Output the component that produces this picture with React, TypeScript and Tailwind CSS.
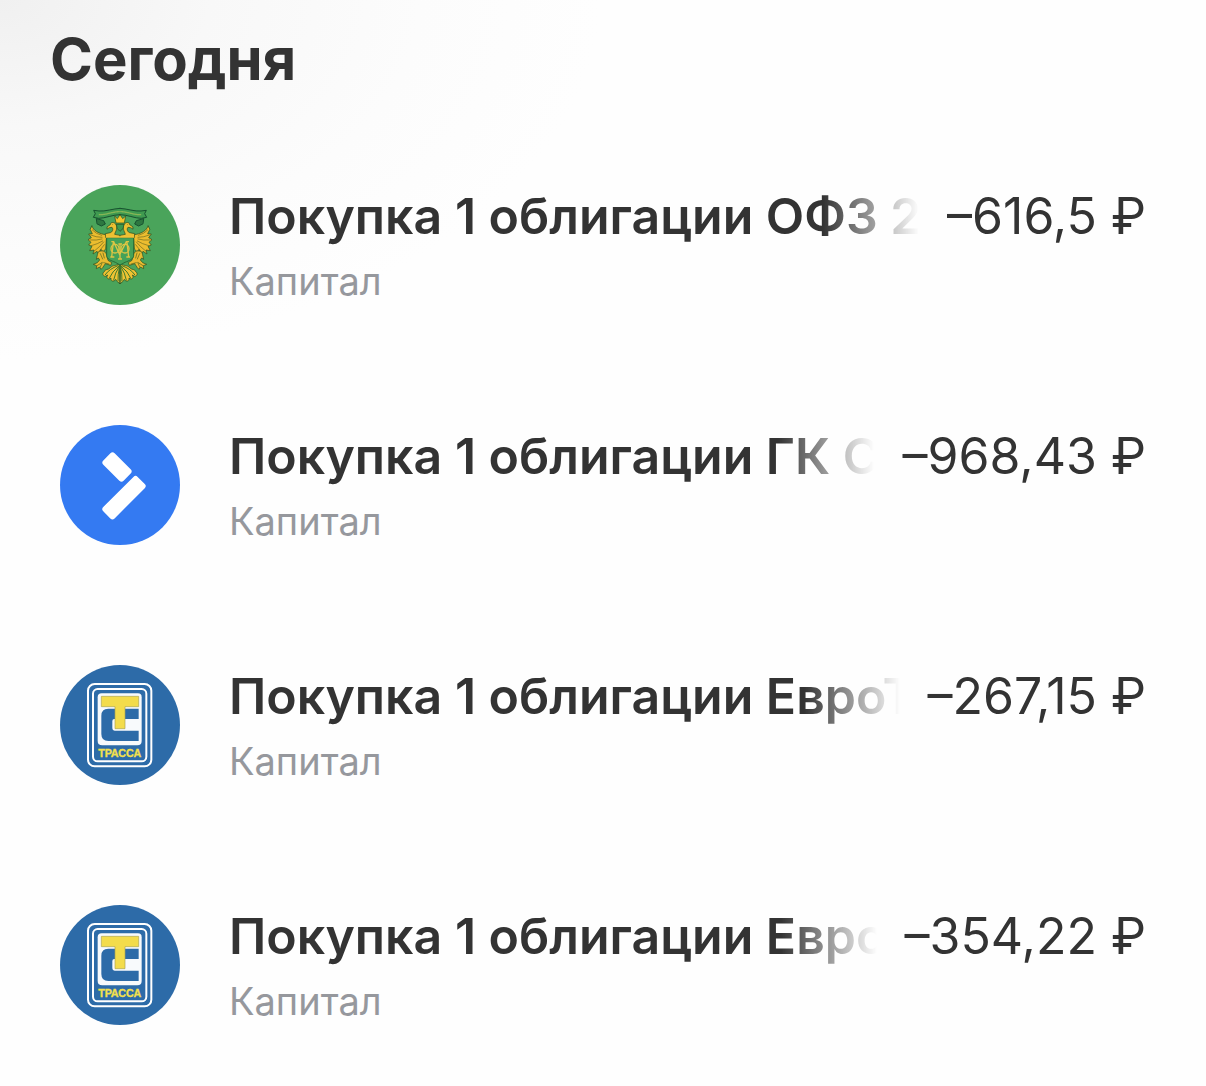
import type { ReactNode } from "react";

function EagleHalf() {
  return (
    <g stroke="#2c4a1e" strokeWidth="2" strokeLinejoin="round" strokeLinecap="round">
      {/* ribbon */}
      <path d="M210 100 C190 101 165 110 147 108 L131 106 L136 116 L130 127 L146 130 C166 130 188 119 210 119" fill="#3f9a50" stroke="#17502f" strokeWidth="3" />
      <path d="M140 131 L161 137 L166 147 L154 153 L142 147 Z" fill="#2d7740" stroke="#17502f" strokeWidth="3" />
      <path d="M148 119 C168 120 188 110 208 110" fill="none" stroke="#86b655" strokeWidth="4" strokeDasharray="3 2" />
      {/* wing */}
      <path d="M126 153 C130 168 146 174 160 178 L185 181 L182 190 L169 191 L167 222 L159 230 L153 223 L147 237 L141 229 L129 237 L132 225 L119 227 L126 214 L116 210 L123 202 L114 194 L124 188 L116 177 L127 176 L121 164 Z" fill="#ecbd2f" />
      <path d="M127 165 Q138 177 155 181 M122 180 Q138 187 156 187 M120 195 Q139 197 156 192 M124 212 Q143 207 158 198 M133 228 Q149 216 161 201 M148 228 L163 209" fill="none" stroke="#6b6a20" strokeWidth="2" />
      {/* head and neck */}
      <path d="M172 155 L181 149 C181 142 190 140 196 146 C206 158 196 169 194 178 L210 181 L210 188 L167 188 L166 176 L181 173 C187 171 191 163 186 157 L178 158 L172 162 Z" fill="#edc032" />
      <circle cx="187" cy="149" r="1" fill="#28451f" stroke="none" />
      {/* leg and branch */}
      <path d="M145 231 C155 224 167 228 170 240 L174 256 L185 263 L182 271 L166 266 L158 278 L153 283 L149 276 L139 281 L140 272 L130 268 L142 263 L149 255 L145 249 L139 253 L142 240 Z" fill="#e9bb30" />
      <path d="M151 236 L158 252 M159 234 L163 249 M141 272 L157 262 L151 276 M161 263 L177 267" fill="none" stroke="#4f641f" strokeWidth="2" />
      {/* tail */}
      <path d="M207 268 C197 273 187 270 181 278 C175 286 164 281 163 290 C156 294 158 303 166 304 L173 300 C167 309 175 316 183 309 C181 320 193 321 197 313 C200 321 206 321 209 326 Z" fill="#efc233" />
      <path d="M204 272 Q177 282 166 299 M206 274 Q186 290 178 309 M207 276 Q195 293 191 315 M209 274 Q203 299 204 318" fill="none" stroke="#3f7a2d" strokeWidth="3" />
    </g>
  );
}

function Emblem() {
  return (
    <svg viewBox="30 30 360 360" className="size-full" aria-hidden="true">
      <EagleHalf />
      <g transform="translate(420 0) scale(-1 1)">
        <EagleHalf />
      </g>
      {/* crown */}
      <path d="M194 123 L202 131 L210 119 L218 131 L227 123 L223 144 H198 Z" fill="#f2c52c" stroke="#2c4a1e" strokeWidth="2" />
      <path d="M199 148 Q199 163 210 169 Q222 163 222 148 Z" fill="#3e9a4d" stroke="#2c4a1e" strokeWidth="2" />
      {/* shield with monogram */}
      <path d="M170 188 H251 V241 C251 253 237 257 225 262 L210 270 L196 262 C184 257 170 253 170 241 Z" fill="#45a258" stroke="#286a36" strokeWidth="3" />
      <path d="M168 186 H252" stroke="#f0c33a" strokeWidth="4" />
      <g fill="none" stroke="#dcc544" strokeWidth="4">
        <path d="M184 200 L191 200 L209 239 L229 200 L237 200 M190 202 L185 246 M231 202 L236 246 M181 246 H193 M229 246 H240 M210 207 V252 M205 207 H216 M204 252 H216" />
        <ellipse cx="195" cy="221" rx="12" ry="13" />
        <ellipse cx="225" cy="221" rx="12" ry="13" />
      </g>
    </svg>
  );
}

function Arrow() {
  return (
    <svg viewBox="30 30 360 360" className="size-full" aria-hidden="true" fill="#fff">
      <rect x="-43" y="-24" width="86" height="48" rx="9" transform="translate(201 156) rotate(45)" />
      <rect x="-73" y="-24" width="146" height="48" rx="9" transform="translate(222 248) rotate(-45)" />
    </svg>
  );
}

function Trassa() {
  return (
    <svg viewBox="30 30 360 360" className="size-full" role="img" aria-label="Трасса">
      <g fill="none" stroke="#fff">
        <rect x="114" y="87" width="190" height="247" rx="20" strokeWidth="6" />
        <rect x="129" y="102" width="160" height="217" rx="14" strokeWidth="6" />
      </g>
      <path d="M155 115 H264 Q275 115 275 126 V258 Q275 271 262 271 H157 Q143 271 143 258 V127 Q143 115 155 115 Z" fill="#f8fafc" />
      <path d="M175 161 H266 V192 H193 Q187 192 187 198 V220 Q187 227 194 227 H266 V258 H175 Q154 258 154 237 V182 Q154 161 175 161 Z" fill="#2d6ba8" />
      <path d="M154 124 H266 V155 H225 V221 H195 V155 H154 Z" fill="#f3dc4b" stroke="#a9a553" strokeWidth="2" />
      <text
        x="209"
        y="306"
        textAnchor="middle"
        fill="#f3e04d"
        stroke="#f3e04d"
        strokeWidth="1"
        className="font-['Liberation_Sans',sans-serif] text-[32px] font-bold"
      >
        ТРАССА
      </text>
    </svg>
  );
}

type Operation = {
  title: string;
  amount: string;
  color: string;
  logo: ReactNode;
};

const operations: Operation[] = [
  { title: "Покупка 1 облигации ОФЗ 2", amount: "–616,5 ₽", color: "bg-[#4aa45b]", logo: <Emblem /> },
  { title: "Покупка 1 облигации ГК С", amount: "–968,43 ₽", color: "bg-[#347af2]", logo: <Arrow /> },
  { title: "Покупка 1 облигации ЕвроТ", amount: "–267,15 ₽", color: "bg-[#2d6ba8]", logo: <Trassa /> },
  { title: "Покупка 1 облигации Евро", amount: "–354,22 ₽", color: "bg-[#2d6ba8]", logo: <Trassa /> },
];

function OperationRow({ title, amount, color, logo }: Operation) {
  return (
    <li className="flex items-center gap-[49px] py-15">
      <div className={`size-30 shrink-0 overflow-hidden rounded-full ${color}`}>{logo}</div>
      <div className="min-w-0 flex-1">
        <div className="flex gap-7 text-[50px] leading-[62px] whitespace-nowrap text-[#333]">
          <h2 className="min-w-0 flex-1 overflow-hidden font-semibold [mask-image:linear-gradient(to_right,black_calc(100%_-_96px),transparent)]">
            {title}
          </h2>
          <span>{amount}</span>
        </div>
        <p className="pt-[10px] text-[38px] leading-12 text-[#96989d]">Капитал</p>
      </div>
    </li>
  );
}

function App() {
  return (
    <main className="min-h-screen bg-[#fefefe] bg-[radial-gradient(ellipse_600px_360px_at_0_0,#f0f0f0,#f8f8f8_35%,#fcfcfc_70%,#fefefe)] font-['Inter',sans-serif]">
      <h1 className="px-[50px] pt-6 pb-[31px] text-[58px] leading-[70px] font-bold text-[#333]">Сегодня</h1>
      <ul className="px-15">
        {operations.map((item, i) => (
          <OperationRow key={i} {...item} />
        ))}
      </ul>
    </main>
  );
}

export default App;
